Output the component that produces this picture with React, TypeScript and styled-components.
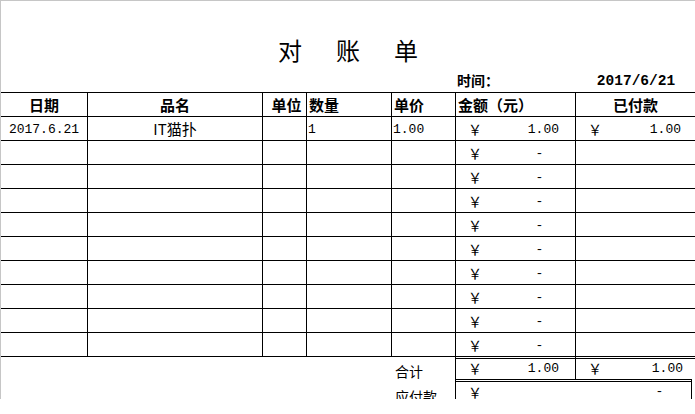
import React from 'react';
import styled, { createGlobalStyle } from 'styled-components';

const GlobalStyle = createGlobalStyle`
  html, body { margin: 0; padding: 0; background: #fff; }
  body { font-family: "Noto Sans CJK SC", sans-serif; color: #000; }
  * { box-sizing: border-box; }
`;

const COLS = '86px 175px 44px 85px 64px 120px 120px';
const CJK = `"Noto Sans CJK SC", sans-serif`;
const MONO = `"Liberation Mono", "Noto Sans CJK SC", monospace`;

const Page = styled.div`
  width: 695px;
  height: 414px;
  background: #fff;
`;

const Sheet = styled.div`
  position: relative;
  width: 695px;
  height: 399px;
  border-top: 1px solid #c6c6c6;
  border-left: 1px solid #c6c6c6;
  overflow: hidden;
  display: flex;
  flex-direction: column;
  & > * {
    flex-shrink: 0;
  }
`;

const RowMarker = styled.div`
  position: absolute;
  left: -1px;
  top: 163px;
  width: 1px;
  height: 25px;
  background: #5fb34a;
`;

const TitleRow = styled.div`
  height: 69px;
  display: flex;
  justify-content: center;
  align-items: flex-end;
  gap: 34px;
  padding-bottom: 8px;
`;

const TitleChar = styled.span`
  font-family: ${CJK};
  font-size: 24px;
  line-height: 24px;
  font-weight: 400;
`;

const Grid = styled.div`
  display: grid;
  grid-template-columns: ${COLS};
`;

const TimeRow = styled(Grid)`
  height: 22px;
`;

const TimeCell = styled.div<{ $col: number; $center?: boolean }>`
  grid-column: ${p => p.$col};
  display: flex;
  align-items: flex-end;
  justify-content: ${p => (p.$center ? 'center' : 'flex-start')};
  padding: 0 0 3px 2px;
`;

const BoldLabel = styled.span`
  font-family: ${CJK};
  font-weight: 700;
  font-size: 14px;
  line-height: 18px;
`;

const BoldDate = styled.span`
  font-family: ${MONO};
  font-weight: 700;
  font-size: 14.5px;
  line-height: 16px;
`;

const Table = styled.div`
  border-top: 1px solid #000;
  display: flex;
  flex-direction: column;
`;

const Row = styled(Grid)`
  height: 24px;
  flex-shrink: 0;
  border-bottom: 1px solid #000;
`;

const Cell = styled.div<{ $align?: 'left' | 'center'; $padL?: number }>`
  display: flex;
  align-items: flex-end;
  justify-content: ${p => (p.$align === 'center' ? 'center' : 'flex-start')};
  padding: 0 0 2px ${p => p.$padL ?? 0}px;
  overflow: hidden;
  white-space: nowrap;
  & + & {
    border-left: 1px solid #000;
  }
`;

const MoneyCell = styled(Cell)<{ $padR: number }>`
  justify-content: space-between;
  padding-left: 12px;
  padding-right: ${p => p.$padR}px;
`;

const HeadText = styled.span`
  font-family: ${CJK};
  font-weight: 700;
  font-size: 15px;
  line-height: 18px;
`;

const CnText = styled.span`
  font-family: ${CJK};
  font-size: 15px;
  line-height: 18px;
`;

const Num = styled.span`
  font-family: ${MONO};
  font-size: 13px;
  line-height: 16px;
  white-space: pre;
`;

const Yen = styled.span`
  font-family: ${CJK};
  font-size: 14px;
  font-weight: 400;
  line-height: 17px;
`;

const TotalRow = styled(Grid)`
  height: 23px;
  margin-top: -1px;
`;

const PayRow = styled(Grid)`
  height: 24px;
`;

const SumLabel = styled.div`
  grid-column: 5;
  display: flex;
  align-items: flex-end;
  padding: 0 0 0 4px;
`;

const PayLabel = styled(SumLabel)`
  align-items: flex-start;
  padding-top: 9px;
`;

const LabelText = styled.span`
  font-family: ${CJK};
  font-size: 14px;
  line-height: 16px;
`;

const SumCell = styled.div<{ $padR: number; $span?: boolean; $gapR?: number }>`
  display: flex;
  justify-content: space-between;
  align-items: ${p => (p.$span ? 'flex-start' : 'flex-end')};
  border-top: 3px double #000;
  border-left: 1px solid #000;
  padding: ${p => (p.$span ? '2px' : '0')} ${p => p.$padR}px 2px 12px;
  grid-column: ${p => (p.$span ? '6 / 8' : 'auto')};
  margin-right: ${p => p.$gapR ?? 0}px;
  border-right: ${p => (p.$span ? '1px solid #000' : 'none')};
`;

type DataRow = {
  date: string;
  name: string;
  unit: string;
  qty: string;
  price: string;
  amount: string;
  paid: string;
};

const rows: DataRow[] = [
  { date: '2017.6.21', name: 'IT猫扑', unit: '', qty: '1', price: '1.00', amount: '1.00', paid: '1.00' },
  ...Array.from({ length: 9 }, () => ({
    date: '',
    name: '',
    unit: '',
    qty: '',
    price: '',
    amount: '-  ',
    paid: '',
  })),
];

export default function App() {
  return (
    <Page>
      <GlobalStyle />
      <Sheet>
        <RowMarker />
        <TitleRow>
          <TitleChar>对</TitleChar>
          <TitleChar>账</TitleChar>
          <TitleChar>单</TitleChar>
        </TitleRow>
        <TimeRow>
          <TimeCell $col={6}>
            <BoldLabel>时间：</BoldLabel>
          </TimeCell>
          <TimeCell $col={7} $center>
            <BoldDate>2017/6/21</BoldDate>
          </TimeCell>
        </TimeRow>
        <Table>
          <Row>
            <Cell $align="center"><HeadText>日期</HeadText></Cell>
            <Cell $align="center"><HeadText>品名</HeadText></Cell>
            <Cell $align="center" $padL={4}><HeadText>单位</HeadText></Cell>
            <Cell $padL={2}><HeadText>数量</HeadText></Cell>
            <Cell $padL={2}><HeadText>单价</HeadText></Cell>
            <Cell $padL={2}><HeadText>金额（元）</HeadText></Cell>
            <Cell $align="center"><HeadText>已付款</HeadText></Cell>
          </Row>
          {rows.map((r, i) => (
            <Row key={i}>
              <Cell $align="center"><Num>{r.date}</Num></Cell>
              <Cell $align="center"><CnText>{r.name}</CnText></Cell>
              <Cell><Num>{r.unit}</Num></Cell>
              <Cell $padL={1}><Num>{r.qty}</Num></Cell>
              <Cell $padL={1}><Num>{r.price}</Num></Cell>
              <MoneyCell $padR={16}>
                <Yen>￥</Yen>
                <Num>{r.amount}</Num>
              </MoneyCell>
              <MoneyCell $padR={14}>
                {r.paid ? (
                  <>
                    <Yen>￥</Yen>
                    <Num>{r.paid}</Num>
                  </>
                ) : null}
              </MoneyCell>
            </Row>
          ))}
        </Table>
        <TotalRow>
          <SumLabel><LabelText>合计</LabelText></SumLabel>
          <SumCell $padR={16}>
            <Yen>￥</Yen>
            <Num>1.00</Num>
          </SumCell>
          <SumCell $padR={12}>
            <Yen>￥</Yen>
            <Num>1.00</Num>
          </SumCell>
        </TotalRow>
        <PayRow>
          <PayLabel><LabelText>应付款</LabelText></PayLabel>
          <SumCell $span $padR={12} $gapR={3}>
            <Yen>￥</Yen>
            <Num>-  </Num>
          </SumCell>
        </PayRow>
      </Sheet>
    </Page>
  );
}
